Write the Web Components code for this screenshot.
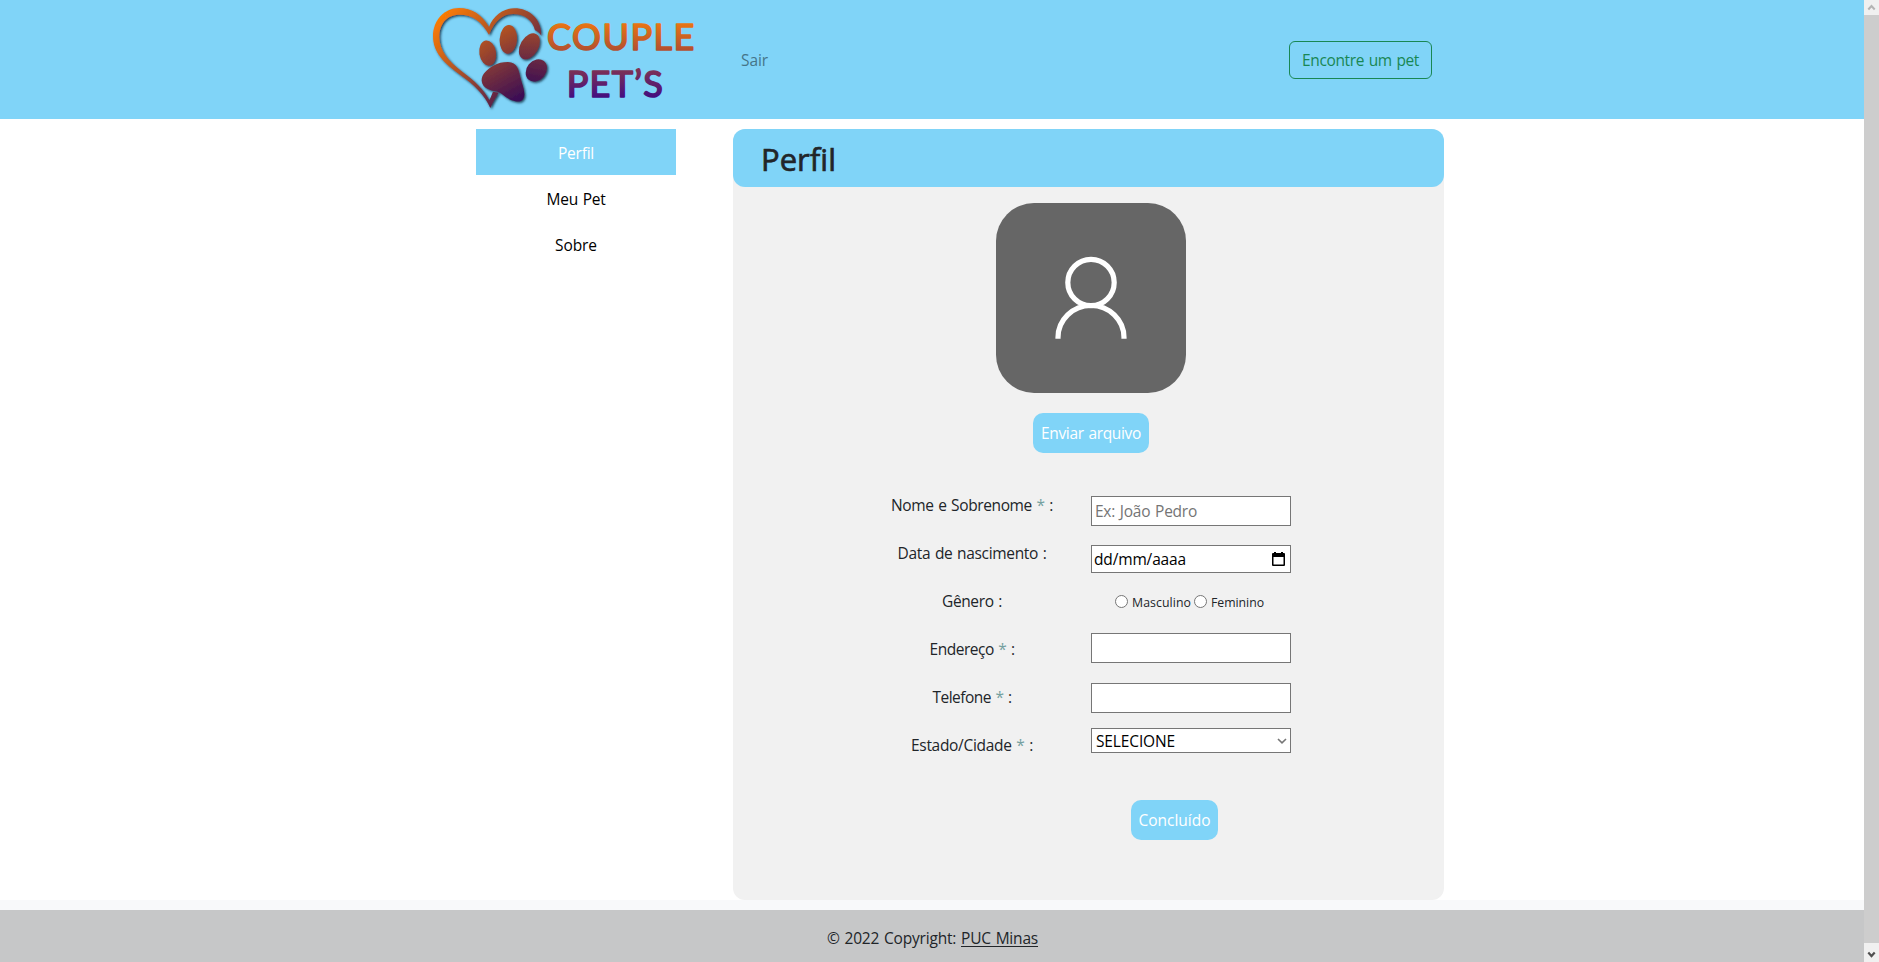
<!DOCTYPE html>
<html lang="pt-BR">
<head>
<meta charset="utf-8">
<title>Couple Pet's - Perfil</title>
<style>
html,body{margin:0;height:100%;overflow:hidden;background:#fff}
body{font:15.5px/24px "Open Sans","Noto Sans",sans-serif;color:#212529}
</style>
</head>
<body>
<pet-app></pet-app>
<script>
const define=(name,html,setup)=>customElements.define(name,class extends HTMLElement{
  constructor(){super();this.attachShadow({mode:'open'}).innerHTML=html;}
  connectedCallback(){if(setup)setup(this);}
});

/* Text tracked to a given width */
define('fit-text',`<style>:host{display:inline-block;white-space:nowrap;word-spacing:1px}</style><slot></slot>`,el=>{
  const w=+el.getAttribute('w');
  const fit=()=>{
    el.style.letterSpacing='0';
    const n=el.textContent.length, nat=el.getBoundingClientRect().width;
    if(nat){el.style.letterSpacing=((w-nat)/n)+'px';}
  };
  requestAnimationFrame(fit);
});

define('pet-logo',`<style>:host{display:block;width:290px;height:119px}svg{display:block}text{font-family:Lato,Inter,sans-serif;font-weight:400}</style>
<svg width="290" height="119" viewBox="0 0 870 357">
<defs>
<linearGradient id="h" gradientUnits="userSpaceOnUse" x1="60" y1="50" x2="320" y2="290"><stop offset="0" stop-color="#fb7c04"/><stop offset=".5" stop-color="#a04a2c"/><stop offset="1" stop-color="#3b0f55"/></linearGradient>
<linearGradient id="p" gradientUnits="userSpaceOnUse" x1="215" y1="90" x2="320" y2="285"><stop offset="0" stop-color="#b9561f"/><stop offset=".5" stop-color="#78323c"/><stop offset="1" stop-color="#3a0d55"/></linearGradient>
<linearGradient id="t" gradientUnits="userSpaceOnUse" x1="0" y1="68" x2="0" y2="292"><stop offset="0" stop-color="#ea7612"/><stop offset=".36" stop-color="#b4502f"/><stop offset=".64" stop-color="#7c3055"/><stop offset="1" stop-color="#430f80"/></linearGradient>
<filter id="s" x="-10%" y="-10%" width="125%" height="125%"><feDropShadow dx="4" dy="4" stdDeviation="3" flood-color="#102838" flood-opacity=".85"/></filter>
</defs>
<g filter="url(#s)">
<path fill="url(#h)" d="M207 81C185 43 156 24 117 24C72 24 39 62 39 109C39 157 72 190 124 227C163 254 194 285 211 324C217 307 228 292 236 278L219 275C215 284 212 293 208 300C192 268 163 242 123 212C85 183 58 151 58 112C58 72 79 44 119 44C158 44 184 64 207 104C225 62 248 42 280 42C312 42 337 59 345 91C352 93 359 99 364 107C364 57 329 25 283 25C250 25 220 48 207 81Z"/>
<g fill="url(#p)">
<ellipse cx="203" cy="159" rx="25" ry="38" transform="rotate(-9 203 159)"/>
<ellipse cx="265" cy="118" rx="26" ry="43" transform="rotate(4 265 118)"/>
<ellipse cx="328" cy="139" rx="27" ry="42" transform="rotate(30 328 139)"/>
<ellipse cx="349" cy="211" rx="29" ry="36" transform="rotate(39 349 211)"/>
<path d="M264 186C292 188 296 208 301 232C305 250 314 268 313 285C312 302 299 308 283 303C260 299 247 278 229 274C211 271 187 265 185 242C184 223 202 207 220 197C234 189 248 186 264 186Z"/>
</g></g>
<g fill="url(#t)" stroke="url(#t)" stroke-width="5" stroke-linejoin="round">
<text x="381" y="149" font-size="108" textLength="442" lengthAdjust="spacing">COUPLE</text>
<text x="440" y="291" font-size="108" textLength="288" lengthAdjust="spacing">PET’S</text>
</g></svg>`);

define('pet-header',`<style>
:host{display:flex;height:119px;background:#80d4f8;padding-left:420px;padding-right:432px;align-items:flex-start;box-sizing:border-box}
.s{margin:48px 0 0 31px;color:#467488}
.b{margin:41px 0 0 auto;box-sizing:border-box;width:143px;height:38px;border:1px solid #198754;border-radius:6px;color:#198754;padding:6px 0 0 12px}
</style><pet-logo></pet-logo><fit-text class="s" w="27">Sair</fit-text><div class="b"><fit-text w="117">Encontre um pet</fit-text></div>`);

define('pet-menu',`<style>:host{display:flex;flex-direction:column;width:200px;color:#000}
div{height:46px;line-height:48px;text-align:center}.a{background:#80d4f8;color:#fff}</style>
<div class="a"><fit-text w="36">Perfil</fit-text></div><div><fit-text w="59">Meu Pet</fit-text></div><div><fit-text w="42">Sobre</fit-text></div>`);

define('pet-button',`<style>:host{display:block;box-sizing:border-box;height:40px;line-height:41px;border-radius:10px;background:#80d4f8;color:#fff;text-align:center}</style><slot></slot>`);

define('pet-avatar',`<style>:host{display:block;width:190px;height:190px;border-radius:38px;background:#666}svg{display:block}</style>
<svg width="190" height="190" fill="none" stroke="#fff" stroke-width="5.2"><circle cx="95" cy="79.5" r="23.2"/><path d="M62 135.700V134.500a33 32 0 0 1 66 0V135.700"/></svg>`);

define('pet-field',`<style>:host{display:flex;box-sizing:border-box;width:200px;height:30px;border:1px solid #767676;background:#fff;padding:0 3px;align-items:center;justify-content:space-between}</style><slot></slot>`);

define('pet-form',`<style>
:host{display:grid;grid-template-columns:200px 200px;column-gap:20px}
.l{display:flex;flex-direction:column;text-align:center;margin:-3px -1px 0 1px}
.l div{height:48px}i{font-style:normal;color:#75a0a0}
.f{display:flex;flex-direction:column}
.r{display:flex;align-items:center;height:20px;margin:18px 0 23px 24px;font-size:12.3px}
.r b{box-sizing:border-box;width:13px;height:13px;border:1px solid #767676;border-radius:50%;background:#fff}
.r fit-text{margin:4px 3px 0 4px}
svg{display:block}
</style>
<div class="l">
<div><fit-text w="162">Nome e Sobrenome <i>*</i> :</fit-text></div>
<div><fit-text w="149">Data de nascimento :</fit-text></div>
<div><fit-text w="60">Gênero :</fit-text></div>
<div><fit-text w="85">Endereço <i>*</i> :</fit-text></div>
<div><fit-text w="79">Telefone <i>*</i> :</fit-text></div>
<div><fit-text w="122">Estado/Cidade <i>*</i> :</fit-text></div>
</div>
<div class="f">
<pet-field style="color:#757575"><fit-text w="102">Ex: João Pedro</fit-text></pet-field>
<pet-field style="height:28px;margin-top:19px;color:#000;padding-left:2px"><fit-text w="92">dd/mm/aaaa</fit-text>
<svg width="15" height="16" viewBox="0 0 15 16" style="margin-right:1px"><path fill="#000" fill-rule="evenodd" d="M3 1h2v1h5V1h2v1h1q1 0 1 1v11q0 1-1 1H2q-1 0-1-1V3q0-1 1-1h1zM2.500 6v7.500h10V6z"/></svg></pet-field>
<div class="r"><b style="margin-left:0"></b><fit-text w="59">Masculino</fit-text><b></b><fit-text w="53">Feminino</fit-text></div>
<pet-field style="margin-top:-1px"></pet-field>
<pet-field style="margin-top:20px"></pet-field>
<pet-field style="height:25px;margin-top:15px;color:#000;padding-left:4px"><fit-text w="79">SELECIONE</fit-text><svg width="10" height="8" fill="none" stroke="#767676" stroke-width="1.600"><path d="M1 2l4 3.800L9 2"/></svg></pet-field>
</div>`);

define('pet-panel',`<style>
:host{display:flex;flex-direction:column;width:711px;height:771px;background:#f1f1f1;border-radius:12px}
h2{margin:0;height:58px;box-sizing:border-box;padding-left:28px;border-radius:12px;background:#80d4f8;font-weight:500;font-size:31px;line-height:61px;-webkit-text-stroke:.7px #212529}
pet-avatar{margin:16px 0 0 263px}
.u{width:116px;margin:20px 0 0 300px}
pet-form{margin:43px 0 0 138px;height:288px}
.c{width:87px;margin:16px 0 0 398px}
</style><h2><fit-text w="75">Perfil</fit-text></h2>
<pet-avatar></pet-avatar><pet-button class="u"><fit-text w="100">Enviar arquivo</fit-text></pet-button>
<pet-form></pet-form><pet-button class="c"><fit-text w="72">Concluído</fit-text></pet-button>`);

define('pet-footer',`<style>:host{display:block;height:52px;margin-top:10px;background:#c6c7c8;box-sizing:border-box;padding:16px 0 0 827px}
a{text-decoration:underline;text-underline-offset:2px}</style><fit-text w="211">© 2022 Copyright: <a>PUC Minas</a></fit-text>`);

define('page-scrollbar',`<style>:host{display:flex;flex-direction:column;justify-content:space-between;width:15px;height:962px;background:#cdcdcd}
div{height:15px;background:#f0f0f0}.d{height:19px}svg{display:block}</style>
<div><svg width="15" height="15" fill="none" stroke="#b4b4b4" stroke-width="2"><path d="M4.300 9.500L7.500 6L10.700 9.500"/></svg></div>
<div class="d"><svg width="15" height="19" fill="none" stroke="#505050" stroke-width="2.200"><path d="M4.300 9.500L7.500 13L10.700 9.500"/></svg></div>`);

define('pet-app',`<style>:host{display:flex;width:1879px;height:962px}
main{width:1864px;display:flex;flex-direction:column;background:#f8f9fa}
.row{display:flex;align-items:flex-start;height:781px;box-sizing:border-box;padding:10px 0 0 476px;gap:57px;background:#fff}
</style><main><pet-header></pet-header><div class="row"><pet-menu></pet-menu><pet-panel></pet-panel></div><pet-footer></pet-footer></main><page-scrollbar></page-scrollbar>`);
</script>
</body>
</html>
